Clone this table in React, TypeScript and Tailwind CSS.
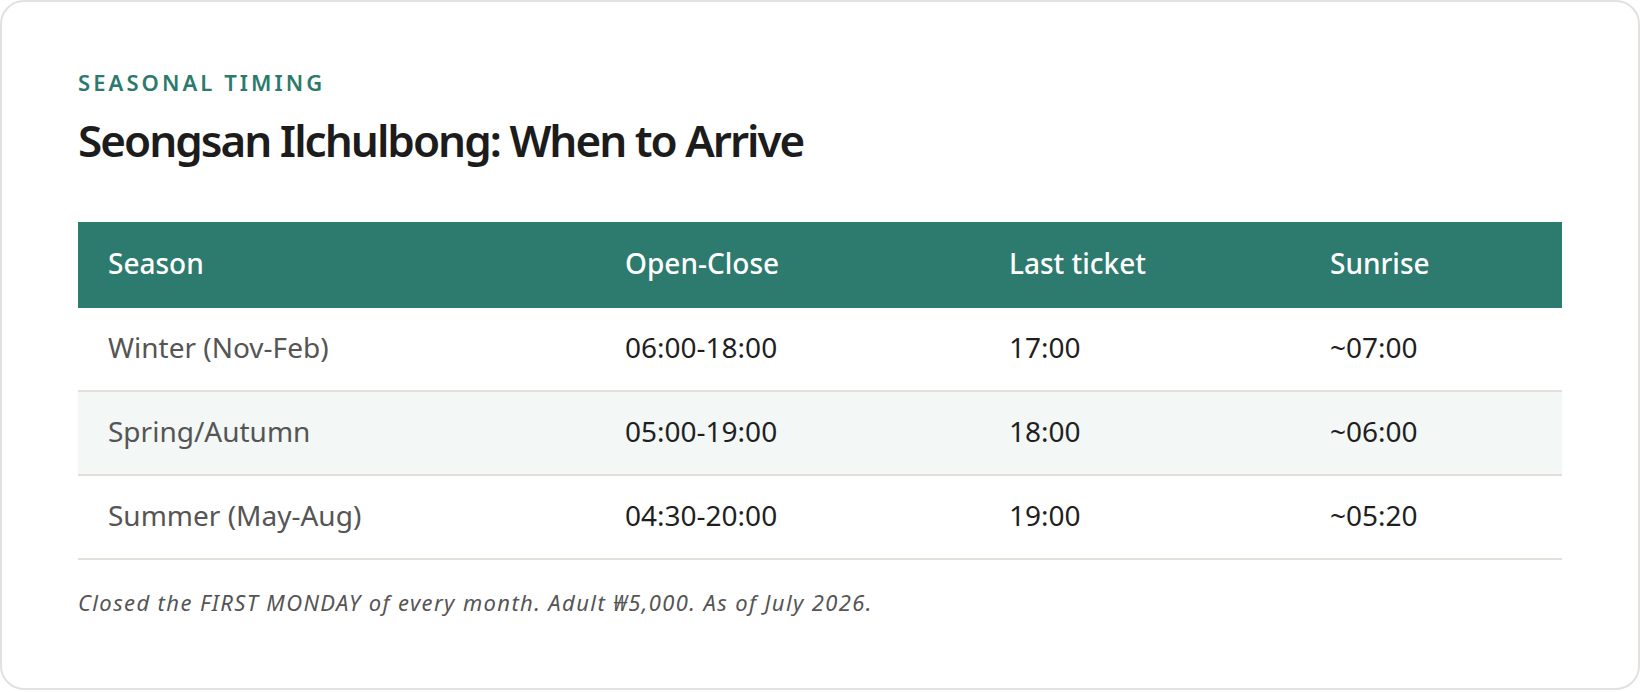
const rows = [
  { season: 'Winter (Nov-Feb)', hours: '06:00-18:00', last: '17:00', sunrise: '~07:00' },
  { season: 'Spring/Autumn', hours: '05:00-19:00', last: '18:00', sunrise: '~06:00' },
  { season: 'Summer (May-Aug)', hours: '04:30-20:00', last: '19:00', sunrise: '~05:20' },
]

const font = { fontFamily: '"Noto Sans", "Noto Sans CJK KR", sans-serif' }

export default function App() {
  return (
    <div className="bg-white" style={font}>
      <section className="rounded-[24px] border-2 border-[#e3e1dd] bg-white px-[76px] pt-[69px] pb-[71px]">
        <p className="text-[22px] leading-[22px] font-semibold uppercase tracking-[0.14em] text-[#2b7a6d]">
          Seasonal Timing
        </p>
        <h1 className="mt-[25px] text-[44px] leading-[44px] font-semibold tracking-[-0.045em] text-[#1c1c1c]">
          Seongsan Ilchulbong: When to Arrive
        </h1>

        <table className="mt-[60px] w-full table-fixed border-collapse text-[28px] leading-[42px]">
          <colgroup>
            <col className="w-[517px]" />
            <col className="w-[384px]" />
            <col className="w-[321px]" />
            <col />
          </colgroup>
          <thead>
            <tr className="bg-[#2d7a6e] text-white">
              <th className="pl-[30px] pt-[20px] pb-[24px] text-left font-medium">Season</th>
              <th className="pl-[30px] pt-[20px] pb-[24px] text-left font-medium">Open-Close</th>
              <th className="pl-[30px] pt-[20px] pb-[24px] text-left font-medium">Last ticket</th>
              <th className="pl-[30px] pt-[20px] pb-[24px] text-left font-medium">Sunrise</th>
            </tr>
          </thead>
          <tbody>
            {rows.map((r, i) => (
              <tr key={r.season} className={`border-b-2 border-[#e2dfda] ${i === 1 ? 'bg-[#f3f7f6]' : 'bg-white'}`}>
                <td className="pl-[30px] pt-[18px] pb-[22px] text-[#555555]">{r.season}</td>
                <td className="pl-[30px] pt-[18px] pb-[22px] text-[#1f1f1f]">{r.hours}</td>
                <td className="pl-[30px] pt-[18px] pb-[22px] text-[#1f1f1f]">{r.last}</td>
                <td className="pl-[30px] pt-[18px] pb-[22px] text-[#1f1f1f]">{r.sunrise}</td>
              </tr>
            ))}
          </tbody>
        </table>

        <p className="mt-[27px] text-[22px] leading-[30px] italic tracking-[0.063em] text-[#555555]">
          Closed the FIRST MONDAY of every month. Adult ₩5,000. As of July 2026.
        </p>
      </section>
    </div>
  )
}
